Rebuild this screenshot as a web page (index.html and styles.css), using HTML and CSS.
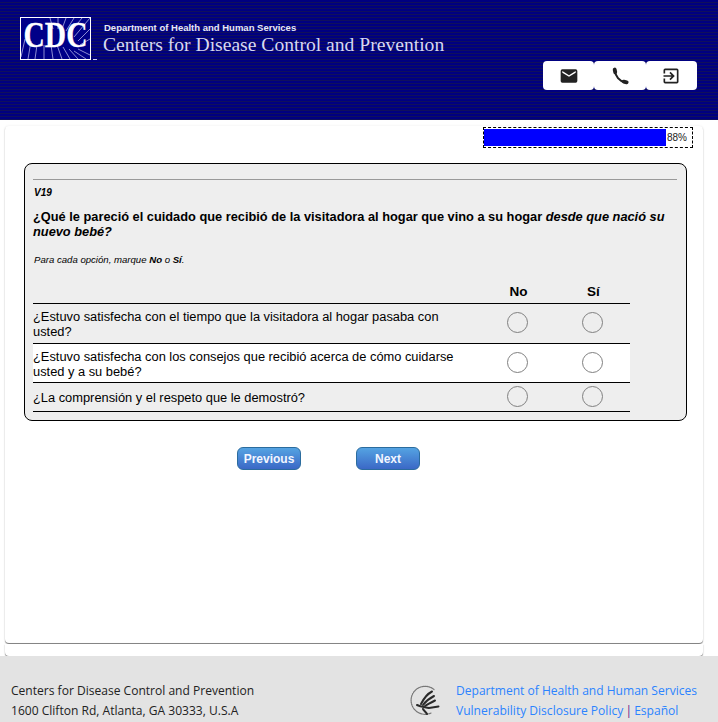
FILE: index.html
```html
<!DOCTYPE html>
<html lang="es">
<head>
<meta charset="utf-8">
<title>CDC PRAMS</title>
<link rel="stylesheet" href="styles.css">
</head>
<body>
<header class="masthead">
  <div class="brand">
    <svg class="logo" width="78" height="46" viewBox="0 0 78 46">
      <rect x="0.5" y="0.500" width="70" height="42" fill="#000088" stroke="#fff"/>
      <g stroke="#c9c9f2" stroke-width="0.7" fill="none">
        <path d="M1 40L5 22M8 42L11 24M15 42L17 28M24 42L24 28M33 42L31 28M42 42L37 28M50 42L43 30M58 42L49 32M66 42L54 34M70 38L58 32M30 1L33 12M38 1L38 12M46 1L42 12M54 1L46 14M62 1L50 16M70 1L54 20M70 12L58 24M70 22L60 28"/>
      </g>
      <text class="logo-text" transform="translate(35.500 30) scale(.82 1)" text-anchor="middle">CDC</text>
      <rect x="73" y="42" width="4" height="1" fill="#c9c9f2"/>
    </svg>
    <div class="brand-names">
      <div class="brand-dept">Department of Health and Human Services</div>
      <div class="brand-cdc">Centers for Disease Control and Prevention</div>
    </div>
  </div>
  <div class="actions">
    <button class="action" aria-label="Email">
      <svg width="20" height="20" viewBox="0 0 24 24"><path fill="#222" d="M20 4H4a2 2 0 0 0-2 2v12a2 2 0 0 0 2 2h16a2 2 0 0 0 2-2V6a2 2 0 0 0-2-2zm0 4l-8 5-8-5V6l8 5 8-5v2z"/></svg>
    </button>
    <button class="action" aria-label="Phone">
      <svg width="20" height="20" viewBox="0 0 24 24" fill="none" stroke="#222" stroke-linecap="round"><path stroke-width="2.400" d="M6 6C6.500 12 11 18 18 19.500"/><path stroke-width="4.600" d="M5.600 4.200L6.300 7.500"/><path stroke-width="4.600" d="M16.500 18.700L20 19.600"/></svg>
    </button>
    <button class="action" aria-label="Sign in">
      <svg width="20" height="20" viewBox="0 0 24 24"><path fill="#222" d="M10.090 15.590L11.500 17l5-5-5-5-1.410 1.410L12.670 11H3v2h9.670l-2.580 2.590zM19 3H5a2 2 0 0 0-2 2v4h2V5h14v14H5v-4H3v4a2 2 0 0 0 2 2h14a2 2 0 0 0 2-2V5a2 2 0 0 0-2-2z"/></svg>
    </button>
  </div>
</header>

<main class="card">
  <div class="progress-row">
    <div class="progress">
      <div class="progress-fill"></div>
      <span class="progress-label">88%</span>
    </div>
  </div>
  <section class="question">
    <hr class="rule">
    <div class="qid">V19</div>
    <h1 class="qtext">¿Qué le pareció el cuidado que recibió de la visitadora al hogar que vino a su hogar <em>desde que nació su nuevo bebé?</em></h1>
    <p class="instr">Para cada opción, marque <b>No</b> o <b>Sí</b>.</p>
    <table class="grid">
      <thead>
        <tr><th></th><th class="opt">No</th><th class="opt">Sí</th></tr>
      </thead>
      <tbody>
        <tr class="r1">
          <td>¿Estuvo satisfecha con el tiempo que la visitadora al hogar pasaba con usted?</td>
          <td class="opt"><span class="radio"></span></td>
          <td class="opt"><span class="radio"></span></td>
        </tr>
        <tr class="r2">
          <td>¿Estuvo satisfecha con los consejos que recibió acerca de cómo cuidarse usted y a su bebé?</td>
          <td class="opt"><span class="radio"></span></td>
          <td class="opt"><span class="radio"></span></td>
        </tr>
        <tr class="r3">
          <td>¿La comprensión y el respeto que le demostró?</td>
          <td class="opt"><span class="radio"></span></td>
          <td class="opt"><span class="radio"></span></td>
        </tr>
      </tbody>
    </table>
  </section>
  <div class="nav">
    <button class="btn">Previous</button>
    <button class="btn">Next</button>
  </div>
</main>
<div class="card-under"></div>

<footer class="footer">
  <div class="addr">
    <div>Centers for Disease Control and Prevention</div>
    <div>1600 Clifton Rd, Atlanta, GA 30333, U.S.A</div>
  </div>
  <div class="hhs">
    <svg class="seal" width="32" height="32" viewBox="0 0 32 32" fill="none" stroke-linecap="round">
      <path d="M25 4.500A14 14 0 1 0 22 28" stroke="#777" stroke-width="1.200" stroke-dasharray="1.300 0.900"/>
      <g stroke="#2a2a2a" stroke-width="2">
        <path d="M12 19C15 13 18 9 23 6.500"/>
        <path d="M14 20C17 16 21 13 25 11"/>
        <path d="M16 21C19 19 23 17 26 15.500"/>
        <path d="M8 20C12 22 16 22 20 23L29.500 21.500"/>
        <path d="M14 24C15 26 17 27 18 29"/>
      </g>
    </svg>
    <div class="links">
      <div><a href="#">Department of Health and Human Services</a></div>
      <div><a href="#">Vulnerability Disclosure Policy</a> <span class="sep">|</span> <a href="#">Español</a></div>
    </div>
  </div>
</footer>
</body>
</html>
```
FILE: styles.css
```css
* { box-sizing: border-box; }
html, body { margin: 0; padding: 0; }
body {
  width: 718px;
  height: 722px;
  overflow: hidden;
  background: #fff;
  font-family: "Liberation Sans", Arial, sans-serif;
  color: #000;
  display: flex;
  flex-direction: column;
}
.masthead {
  height: 120px;
  flex: none;
  padding: 17px 21px 0 20px;
  display: flex;
  justify-content: space-between;
  background: repeating-linear-gradient(to bottom, #000080 0, #000080 2px, #10105c 2px, #10105c 3px);
}
.brand { display: flex; align-items: flex-start; }
.logo { display: block; overflow: visible; }
.logo-text {
  font-family: "Liberation Serif", serif;
  font-weight: 700;
  font-size: 36px;
  fill: #fff;
  stroke: #fff;
  stroke-width: 0.3px;
}
.brand-names { margin-left: 5px; padding-top: 4px; }
.brand-dept {
  margin-left: 1px;
  font-size: 9.500px;
  font-weight: 700;
  line-height: 13px;
  color: #e8e8f8;
}
.brand-cdc {
  font-family: "Liberation Serif", serif;
  font-size: 19.600px;
  line-height: 21px;
  color: #d8d8f0;
  white-space: nowrap;
}
.actions {
  display: flex;
  margin-top: 44px;
  height: 29px;
}
.action {
  width: 51.330px;
  height: 29px;
  border: 0;
  padding: 0;
  background: #fff;
  border-radius: 4px;
  display: flex;
  align-items: center;
  justify-content: center;
}
.card {
  margin: 6px 15px 0 5px;
  height: 517px;
  flex: none;
  background: #fff;
  border-radius: 4px;
  box-shadow: 0 1px 1px rgba(0,0,0,.5), 0 0 3px rgba(0,0,0,.07);
  padding: 1px 10px 0 19px;
}
.progress-row { display: flex; justify-content: flex-end; }
.progress {
  width: 210px;
  height: 21px;
  border: 1px dashed #000;
  padding: 1px 0 0;
  display: flex;
  align-items: flex-start;
  background: #fff;
}
.progress-fill { width: 182px; height: 17px; background: #0000ff; }
.progress-label { font-size: 10px; line-height: 17px; margin-left: 1px; color: #222; }
.question {
  margin-top: 15px;
  height: 258px;
  width: 663px;
  background: #eee;
  border: 1px solid #000;
  border-radius: 8px;
  padding: 15px 9px 0 8px;
}
.rule { margin: 0; border: 0; border-top: 1px solid #999; height: 0; }
.qid { margin-top: 8px; padding-left: 1px; font-size: 10px; line-height: 10px; font-weight: 700; font-style: italic; }
.qtext {
  margin: 11px 0 0;
  font-size: 12.800px;
  line-height: 15px;
  font-weight: 700;
}
.instr { margin: 15px 0 0; padding-left: 1px; font-size: 9.600px; line-height: 11px; font-style: italic; }
.grid {
  margin-top: 18px;
  width: 597px;
  border-collapse: collapse;
  font-size: 12.850px;
}
.grid th { height: 20px; padding: 0 0 3px; font-size: 13.500px; font-weight: 700; }
.grid th.opt { padding-left: 2px; }
.grid thead tr { border-bottom: 1px solid #000; }
.grid td { padding: 0 0 1px; line-height: 15px; }
.grid tbody tr { border-bottom: 1px solid #000; }
.grid td:first-child { padding: 1px 20px 0 0; }
.grid .opt { width: 75px; text-align: center; }
.grid th:first-child { width: 447px; }
.r1 td { height: 40px; }
.grid .r1 td.opt { padding-bottom: 2px; }
.r2 td { height: 39px; background: #fff; }
.grid .r2 td:first-child { padding-top: 2px; }
.r3 td { height: 29px; }
.radio {
  display: block;
  width: 21px;
  height: 21px;
  margin: 0 auto;
  border: 1px solid #808080;
  border-radius: 50%;
  background: transparent;
}
.nav {
  margin-top: 26px;
  display: flex;
  gap: 55px;
  padding-left: 213px;
}
.btn {
  width: 64px;
  height: 23px;
  padding: 0;
  border: 1px solid #2b6c9e;
  border-radius: 6px;
  background: linear-gradient(to bottom, #54a3e2, #3b68c6);
  color: #f2f6ff;
  font-family: "Liberation Sans", Arial, sans-serif;
  font-size: 12px;
  font-weight: 700;
}
.card-under {
  margin: 1px 15px 0 5px;
  height: 12px;
  flex: none;
  border-radius: 0 0 4px 4px;
  background: #fff;
  box-shadow: 0 1px 1px rgba(0,0,0,.5), 0 0 3px rgba(0,0,0,.07);
}
.footer {
  position: relative;
  flex: none;
  width: 718px;
  height: 66px;
  background: #e3e3e3;
  padding: 25px 21px 0 11px;
  display: flex;
  justify-content: space-between;
  font-family: "Open Sans", sans-serif;
  font-size: 12.050px;
  line-height: 19.500px;
  color: #222;
}
.hhs { display: flex; align-items: flex-start; }
.seal { display: block; margin: 4px 15px 0 0; }
.links { width: 241px; white-space: nowrap; }
.links a { color: #2c83ff; text-decoration: none; }
.sep { color: #6a1b8a; margin: 0 -1px 0 -1px; }
```
